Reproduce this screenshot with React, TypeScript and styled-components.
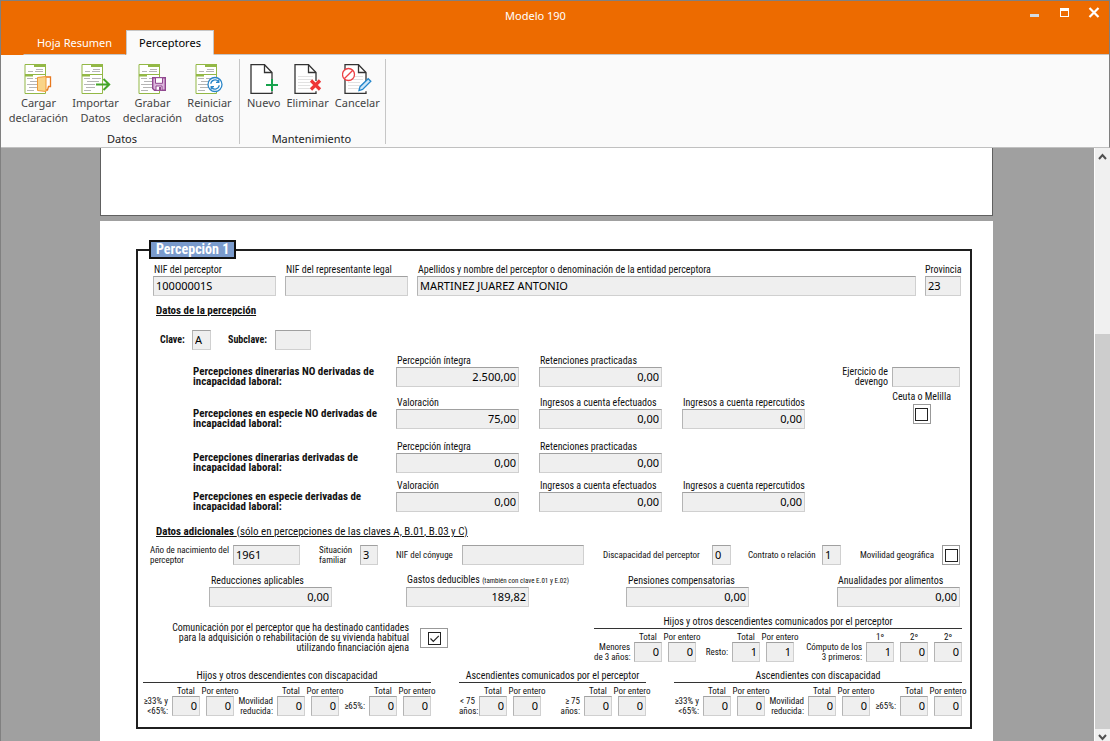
import React, { useId, useState } from 'react';
import styled, { createGlobalStyle } from 'styled-components';

const UI = '"Noto Sans", "Open Sans", sans-serif';
const FORM = '"Roboto Condensed", Roboto, "Liberation Sans", sans-serif';

const GlobalStyle = createGlobalStyle`
  * { box-sizing: border-box; }
  body { margin: 0; font-family: ${UI}; font-size: 11px; color: #111; background: #a0a0a0; }
`;

const Window = styled.div`
  display: flex;
  flex-direction: column;
  height: 100vh;
  overflow: hidden;
  border-top: 1px solid #808080;
  border-left: 1px solid #808080;
`;

/* ---------- title bar and tabs ---------- */

const Header = styled.header`
  flex: none;
  background: #ed6b00;
  border-right: 1px solid #808080;
`;

const TitleBar = styled.div`
  display: flex;
  height: 29px;
  padding-left: 50px;
`;

const Title = styled.h1`
  flex: 1;
  margin: 0;
  font-size: 11px;
  font-weight: 400;
  line-height: 29px;
  text-align: center;
  color: #fff;
`;

const WindowControls = styled.div`
  display: flex;
  justify-content: flex-end;
  width: 89px;
  padding: 6px 9px 0 0;
`;

const WindowButton = styled.button`
  flex: none;
  width: 30px;
  height: 12px;
  padding: 0;
  border: 0;
  background: none;

  svg { display: block; margin-left: auto; }
`;

const Tabs = styled.nav`
  display: flex;
  height: 25px;
  padding-left: 22px;
`;

const Tab = styled.button<{ $active?: boolean }>`
  width: ${(p) => (p.$active ? 88 : 103)}px;
  padding: 0;
  border: 1px solid ${(p) => (p.$active ? '#c6c6c6' : 'transparent')};
  border-bottom-color: ${(p) => (p.$active ? '#fafafa' : '#c6c6c6')};
  background: ${(p) => (p.$active ? '#fafafa' : 'none')};
  color: ${(p) => (p.$active ? '#000' : '#fff')};
  font: 11px ${UI};
`;

const TabRule = styled.div`
  flex: 1;
  border-bottom: 1px solid #c6c6c6;
`;

/* ---------- ribbon ---------- */

const Ribbon = styled.div`
  display: flex;
  flex: none;
  height: 93px;
  padding-top: 4px;
  background: #fafafa;
  border-right: 1px solid #808080;
  border-bottom: 1px solid #c0c0c0;
`;

const RibbonGroup = styled.section<{ $start: number; $end: number }>`
  display: flex;
  flex-direction: column;
  justify-content: space-between;
  height: 85px;
  padding: 5px ${(p) => p.$end}px 0 ${(p) => p.$start}px;
  border-right: 1px solid #c6c6c6;
`;

const Tools = styled.div<{ $gap?: number }>`
  display: flex;
  gap: ${(p) => p.$gap ?? 0}px;
`;

const Tool = styled.button<{ $width?: number }>`
  display: flex;
  flex-direction: column;
  align-items: center;
  gap: 1px;
  width: ${(p) => (p.$width ? `${p.$width}px` : 'auto')};
  padding: 0;
  border: 0;
  background: none;
  color: #444;
  font: 11px/15px ${UI};
  white-space: nowrap;
`;

const GroupName = styled.h2`
  margin: 0;
  padding-right: 4px;
  font-size: 11px;
  font-weight: 400;
  line-height: 10px;
  text-align: center;
  color: #222;
`;

/* ---------- document area ---------- */

const Body = styled.div`
  display: flex;
  flex: 1;
  min-height: 0;
`;

const Workspace = styled.main`
  flex: 1;
  min-width: 0;
  overflow: hidden;
  padding: 0 101px 0 99px;
`;

const PreviousSheet = styled.div`
  height: 68px;
  margin-bottom: 5px;
  background: #fff;
  border: 1px solid #606060;
  border-top: 0;
`;

const Sheet = styled.form`
  min-height: 100%;
  padding: 19px 21px 20px 36px;
  background: #fff;
  font-family: ${FORM};
  font-size: 10px;
`;

const Frame = styled.fieldset`
  min-width: 0;
  margin: 0;
  padding: 5px 8px 11px 0;
  border: 2px solid #1f1f1f;
`;

const Legend = styled.legend`
  margin-left: 11px;
  padding: 0 5px;
  border: 2px solid #111;
  background: #7a9bcd;
  color: #fff;
  font-size: 14px;
  font-weight: 700;
  line-height: 15px;
`;

const Row = styled.div<{ $top?: number; $left?: number }>`
  display: flex;
  align-items: flex-end;
  margin-top: ${(p) => p.$top ?? 0}px;
  padding-left: ${(p) => p.$left ?? 0}px;
`;

const HeaderRow = styled.div`
  display: grid;
  grid-template-columns: 123px 123px 1fr 36px;
  column-gap: 9px;
  padding: 0 1px 0 15px;
`;

const SectionTitle = styled.h3<{ $top: number }>`
  margin: ${(p) => p.$top}px 0 0 18px;
  font-size: 11px;
  font-weight: 700;
  line-height: 14px;
  text-decoration: underline;
`;

const SectionNote = styled.span`
  font-weight: 400;
`;

const FieldBox = styled.div<{ $width?: number; $left?: number }>`
  display: flex;
  flex: none;
  flex-direction: column;
  width: ${(p) => (p.$width ? `${p.$width}px` : 'auto')};
  margin-left: ${(p) => p.$left ?? 0}px;
`;

const TopLabel = styled.label<{ $small?: boolean; $indent?: number }>`
  padding-left: ${(p) => p.$indent ?? 0}px;
  font-size: ${(p) => (p.$small ? 9 : 10)}px;
  line-height: ${(p) => (p.$small ? 10 : 12)}px;
  text-align: ${(p) => (p.$small ? 'center' : 'left')};
  white-space: nowrap;
`;

const LabelNote = styled.span`
  font-size: 7px;
`;

const Entry = styled.input<{ $width?: number; $right?: boolean }>`
  flex: none;
  width: ${(p) => (p.$width ? `${p.$width}px` : '100%')};
  height: 20px;
  padding: 0 2px 1px;
  border: 1px solid;
  border-color: #a0a0a0 #d0d0d0 #d0d0d0 #b4b4b4;
  border-radius: 0;
  background: #efefef;
  color: #000;
  font: 11px ${UI};
  text-align: ${(p) => (p.$right ? 'right' : 'left')};
`;

const InlineField = styled.div<{ $left?: number }>`
  display: flex;
  flex: none;
  align-items: center;
  margin-left: ${(p) => p.$left ?? 0}px;
`;

const SideLabel = styled.label<{ $width: number; $bold?: boolean }>`
  flex: none;
  width: ${(p) => p.$width}px;
  font-size: ${(p) => (p.$bold ? 10 : 9)}px;
  font-weight: ${(p) => (p.$bold ? 700 : 400)};
  line-height: 10px;
  white-space: nowrap;
`;

const Concepts = styled.div`
  display: flex;
  justify-content: space-between;
  align-items: flex-start;
  margin-top: 5px;
`;

const ConceptRow = styled.div<{ $top?: number }>`
  display: grid;
  grid-template-columns: 183px repeat(3, 123px);
  column-gap: 20px;
  align-items: end;
  margin-top: ${(p) => p.$top ?? 0}px;
  padding-left: 55px;
`;

const ConceptName = styled.p`
  margin: 0;
  font-size: 11px;
  font-weight: 700;
  line-height: 10px;
  white-space: nowrap;
`;

const Extras = styled.div`
  display: flex;
  flex-direction: column;
  align-items: flex-end;
  padding: 12px 2px 0 0;
`;

const AccrualField = styled.div`
  display: flex;
  gap: 4px;
  text-align: right;
  line-height: 10px;
`;

const TickField = styled.div`
  display: flex;
  flex-direction: column;
  align-items: center;
  gap: 1px;
  margin-top: 4px;
  padding-right: 9px;
`;

const TickFrame = styled.span<{ $width: number }>`
  display: grid;
  flex: none;
  place-items: center;
  width: ${(p) => p.$width}px;
  height: 20px;
  border: 1px solid #999;
  background: #fff;

  > * { grid-area: 1 / 1; }
`;

const TickInput = styled.input`
  width: 13px;
  height: 13px;
  margin: 0;
  appearance: none;
  border: 1px solid #222;
  background: #fff;
`;

const TickMark = styled.svg`
  pointer-events: none;
`;

const Bottom = styled.div`
  display: flex;
  justify-content: space-between;
  align-items: flex-start;
  margin-top: 9px;
`;

const HousingField = styled.div`
  display: flex;
  align-items: center;
  gap: 11px;
  padding-top: 7px;
`;

const HousingLabel = styled.label`
  width: 271px;
  line-height: 10px;
  text-align: right;
`;

const FamilyRow = styled.div`
  display: flex;
  justify-content: space-between;
  margin-top: 8px;
  padding-left: 5px;
`;

const Family = styled.section`
  display: flex;
  flex-direction: column;
`;

const FamilyTitle = styled.h3`
  margin: 0 0 3px;
  border-bottom: 1px solid #333;
  font-size: 10px;
  font-weight: 400;
  line-height: 12px;
  text-align: center;
`;

const FamilyFields = styled.div`
  display: flex;
  align-items: flex-end;
`;

const CountGroup = styled.div`
  display: flex;
  align-items: flex-end;
  gap: 6px;
`;

const CountName = styled.p<{ $width: number }>`
  display: flex;
  flex-direction: column;
  justify-content: center;
  flex: none;
  width: ${(p) => p.$width}px;
  height: 20px;
  margin: 0 -3px 0 0;
  padding-right: 1px;
  font-size: 9px;
  line-height: 10px;
  text-align: right;
  white-space: nowrap;
`;

const CountField = styled.div`
  display: flex;
  flex-direction: column;
  align-items: center;
  width: 28px;
`;

/* ---------- scroll bar ---------- */

const ScrollBar = styled.div`
  display: flex;
  flex: none;
  flex-direction: column;
  width: 16px;
  border-left: 1px solid #fff;
  background: #f0f0f0;
`;

const ScrollButton = styled.button<{ $last?: boolean }>`
  flex: none;
  height: ${(p) => (p.$last ? 12 : 17)}px;
  padding: ${(p) => (p.$last ? 5 : 0)}px 0 0;
  border: 0;
  background: none;
  line-height: 0;
`;

const Track = styled.div`
  display: flex;
  flex: 1;
  flex-direction: column;
  justify-content: flex-end;
`;

const Thumb = styled.div`
  height: 70%;
  background: #cdcdcd;
`;

/* ---------- icons ---------- */

function ListDoc({ children }: { children: React.ReactNode }) {
  return (
    <svg width="30" height="30" viewBox="0 0 30 30" fill="none" aria-hidden="true">
      <path d="M1 .5h20.5v29H1z" fill="#fff" stroke="#93b846" />
      <path d="M10 0h12v3H10zM1 10h21v1H1zM1 10h8v2.500H1z" fill="#93b846" />
      <path d="M12 5.500h7M4 7.500h5M11 7.500h8M3 14.500h6M11 14.500h9M6 17.500h12M3 20.500h11M5 23.500h9M3 26.500h7" stroke="#b5b5b5" />
      {children}
    </svg>
  );
}

function BlankDoc({ lines, children, shift = 0 }: { lines?: boolean; children: React.ReactNode; shift?: number }) {
  return (
    <svg width={28 + shift} height="30" viewBox={`${-shift} 0 ${28 + shift} 30`} fill="none" aria-hidden="true">
      <path d="M22 17V8.500L14.500.700H1v28.600h21v-2" fill="#fff" stroke="#333" strokeWidth="1.300" />
      <path d="M14.500.700v7.800H22" stroke="#333" strokeWidth="1.300" />
      {lines && <path d="M4 12.500h15M4 15.500h15M4 18.500h12M4 21.500h12M4 24.500h12" stroke="#e2e2e2" />}
      {children}
    </svg>
  );
}

const LoadIcon = () => (
  <ListDoc>
    <path d="M21.500 13h5v9.500h-2l-1 3.500h-2" fill="#fff" stroke="#e8781e" strokeWidth="1.300" />
    <path d="M13.500 13.500l8.500-1v15l-8.500-1z" fill="#f9d488" stroke="#ef9a37" />
  </ListDoc>
);

const ImportIcon = () => (
  <ListDoc>
    <path d="M15 20.500h13M22.500 15l5.700 5.500-5.700 5.500" stroke="#43a528" strokeWidth="2" />
  </ListDoc>
);

const SaveIcon = () => (
  <ListDoc>
    <path d="M14.700 13.700h12.600v12.600H16.500l-1.800-1.800z" fill="#dcb6dc" stroke="#90478f" strokeWidth="1.400" />
    <path d="M17.500 13.700h7v5.600h-7z" fill="#fff" stroke="#90478f" />
    <path d="M18 26.300v-4.300h6v4.300z" fill="#fff" stroke="#90478f" />
    <path d="M21 23h2v3h-2z" fill="#90478f" />
  </ListDoc>
);

const RestartIcon = () => (
  <ListDoc>
    <circle cx="20" cy="20.500" r="7" fill="#fff" stroke="#2a86c8" strokeWidth="1.300" />
    <path d="M15.800 19.800a4.300 4.300 0 0 1 7.600-2.300M24.200 21.200a4.300 4.300 0 0 1-7.600 2.300M23.800 15.500v2.800H21M16.200 25.500v-2.800H19" stroke="#2a86c8" strokeWidth="1.300" />
  </ListDoc>
);

const NewIcon = () => (
  <BlankDoc>
    <path d="M16 21h12M22 15v12" stroke="#17a34d" strokeWidth="2" />
  </BlankDoc>
);

const DeleteIcon = () => (
  <BlankDoc lines>
    <path d="M17 16.500l9 9M26 16.500l-9 9" stroke="#ee3537" strokeWidth="3.200" />
  </BlankDoc>
);

const CancelIcon = () => (
  <BlankDoc lines shift={2}>
    <circle cx="4.500" cy="10.500" r="6" fill="#fff" stroke="#ee4145" strokeWidth="1.300" />
    <path d="M.500 14.500l8.300-8.300" stroke="#ee4145" strokeWidth="1.300" />
    <path d="M15 26.500l1-3.800 8.200-8 2.600 2.500-8.200 8.200z" fill="#cfe6f7" stroke="#2487cc" strokeWidth="1.300" />
  </BlankDoc>
);

/* ---------- form parts ---------- */

type FieldProps = { label: React.ReactNode; value?: string; width?: number; left?: number; right?: boolean; indent?: number };

function Field({ label, value = '', width, left, right, indent }: FieldProps) {
  const id = useId();
  return (
    <FieldBox $width={width} $left={left}>
      <TopLabel htmlFor={id} $indent={indent ?? 1}>{label}</TopLabel>
      <Entry id={id} defaultValue={value} $right={right} />
    </FieldBox>
  );
}

type SideFieldProps = {
  label: React.ReactNode;
  labelWidth: number;
  width: number;
  left?: number;
  value?: string;
  bold?: boolean;
};

function SideField({ label, labelWidth, width, left, value = '', bold }: SideFieldProps) {
  const id = useId();
  return (
    <InlineField $left={left}>
      <SideLabel htmlFor={id} $width={labelWidth} $bold={bold}>{label}</SideLabel>
      <Entry id={id} defaultValue={value} $width={width} />
    </InlineField>
  );
}

function Tick({ id, width, initial = false }: { id: string; width: number; initial?: boolean }) {
  const [on, setOn] = useState(initial);
  return (
    <TickFrame $width={width}>
      <TickInput id={id} type="checkbox" checked={on} onChange={(e) => setOn(e.target.checked)} />
      {on && (
        <TickMark width="13" height="13" viewBox="0 0 13 13" fill="none" aria-hidden="true">
          <path d="M2.500 6.500l2.800 2.800 5.500-5.500" stroke="#222" strokeWidth="1.200" />
        </TickMark>
      )}
    </TickFrame>
  );
}

function Count({ label, value }: { label: string; value: string }) {
  const id = useId();
  return (
    <CountField>
      <TopLabel htmlFor={id} $small>{label}</TopLabel>
      <Entry id={id} defaultValue={value} $width={28} $right />
    </CountField>
  );
}

type CountsProps = { name: string[]; nameWidth: number; values: string[]; labels?: string[] };

function Counts({ name, nameWidth, values, labels = ['Total', 'Por entero'] }: CountsProps) {
  return (
    <CountGroup>
      <CountName $width={nameWidth - 3}>
        {name.map((line) => <span key={line}>{line}</span>)}
      </CountName>
      {values.map((value, i) => <Count key={i} label={labels[i]} value={value} />)}
    </CountGroup>
  );
}

const concepts = [
  { name: 'Percepciones dinerarias NO derivadas de', top: 0, fields: [['Percepción íntegra', '2.500,00'], ['Retenciones practicadas', '0,00']] },
  { name: 'Percepciones en especie NO derivadas de', top: 10, fields: [['Valoración', '75,00'], ['Ingresos a cuenta efectuados', '0,00'], ['Ingresos a cuenta repercutidos', '0,00']] },
  { name: 'Percepciones dinerarias derivadas de', top: 12, fields: [['Percepción íntegra', '0,00'], ['Retenciones practicadas', '0,00']] },
  { name: 'Percepciones en especie derivadas de', top: 7, fields: [['Valoración', '0,00'], ['Ingresos a cuenta efectuados', '0,00'], ['Ingresos a cuenta repercutidos', '0,00']] },
];

const disabilityGroups = [
  { name: ['≥33% y', '<65%:'], nameWidth: 29 },
  { name: ['Movilidad', 'reducida:'], nameWidth: 43 },
  { name: ['≥65%:'], nameWidth: 30 },
];

export default function App() {
  const accrualId = useId();
  return (
    <>
      <GlobalStyle />
      <Window>
        <Header>
          <TitleBar>
            <Title>Modelo 190</Title>
            <WindowControls>
              <WindowButton type="button" aria-label="Minimizar">
                <svg width="10" height="12" viewBox="0 0 10 12"><path d="M0 7h9v3H0z" fill="#d3dbe3" /></svg>
              </WindowButton>
              <WindowButton type="button" aria-label="Maximizar">
                <svg width="10" height="12" viewBox="0 0 10 12"><path d="M0 1h9v9H0zM1 4v5h7V4z" fill="#fff" fillRule="evenodd" /></svg>
              </WindowButton>
              <WindowButton type="button" aria-label="Cerrar">
                <svg width="12" height="12" viewBox="0 0 12 12"><path d="M1.500 1l9 9M10.500 1l-9 9" stroke="#fff" strokeWidth="2.200" /></svg>
              </WindowButton>
            </WindowControls>
          </TitleBar>
          <Tabs>
            <Tab type="button">Hoja Resumen</Tab>
            <Tab type="button" $active>Perceptores</Tab>
            <TabRule />
          </Tabs>
        </Header>

        <Ribbon>
          <RibbonGroup $start={9} $end={1}>
            <Tools>
              <Tool type="button" $width={57}><LoadIcon /><span>Cargar<br />declaración</span></Tool>
              <Tool type="button" $width={57}><ImportIcon /><span>Importar<br />Datos</span></Tool>
              <Tool type="button" $width={57}><SaveIcon /><span>Grabar<br />declaración</span></Tool>
              <Tool type="button" $width={57}><RestartIcon /><span>Reiniciar<br />datos</span></Tool>
            </Tools>
            <GroupName>Datos</GroupName>
          </RibbonGroup>
          <RibbonGroup $start={7} $end={5}>
            <Tools $gap={6}>
              <Tool type="button"><NewIcon />Nuevo</Tool>
              <Tool type="button"><DeleteIcon />Eliminar</Tool>
              <Tool type="button"><CancelIcon />Cancelar</Tool>
            </Tools>
            <GroupName>Mantenimiento</GroupName>
          </RibbonGroup>
        </Ribbon>

        <Body>
          <Workspace>
            <PreviousSheet />
            <Sheet>
              <Frame>
                <Legend>Percepción 1</Legend>

                <HeaderRow>
                  <Field label="NIF del perceptor" value="10000001S" />
                  <Field label="NIF del representante legal" />
                  <Field label="Apellidos y nombre del perceptor o denominación de la entidad perceptora" value="MARTINEZ JUAREZ ANTONIO" />
                  <Field label="Provincia" value="23" indent={0} />
                </HeaderRow>

                <SectionTitle $top={8}>Datos de la percepción</SectionTitle>

                <Row $top={12} $left={22}>
                  <SideField label="Clave:" labelWidth={32} width={19} value="A" bold />
                  <SideField label="Subclave:" labelWidth={47} width={36} left={17} bold />
                </Row>

                <Concepts>
                  <div>
                    {concepts.map((c) => (
                      <ConceptRow key={c.name} $top={c.top}>
                        <ConceptName>{c.name}<br />incapacidad laboral:</ConceptName>
                        {c.fields.map(([label, value]) => <Field key={label} label={label} value={value} right />)}
                      </ConceptRow>
                    ))}
                  </div>
                  <Extras>
                    <AccrualField>
                      <label htmlFor={accrualId}>Ejercicio de<br />devengo</label>
                      <Entry id={accrualId} $width={68} />
                    </AccrualField>
                    <TickField>
                      <TopLabel htmlFor="ceuta">Ceuta o Melilla</TopLabel>
                      <Tick id="ceuta" width={18} />
                    </TickField>
                  </Extras>
                </Concepts>

                <SectionTitle $top={13}>
                  Datos adicionales <SectionNote>(sólo en percepciones de las claves A, B.01, B.03 y C)</SectionNote>
                </SectionTitle>

                <Row $top={6} $left={12}>
                  <SideField label={<>Año de nacimiento del<br />perceptor</>} labelWidth={83} width={67} value="1961" />
                  <SideField label={<>Situación<br />familiar</>} labelWidth={41} width={18} left={19} value="3" />
                  <SideField label="NIF del cónyuge" labelWidth={66} width={122} left={18} />
                  <SideField label="Discapacidad del perceptor" labelWidth={109} width={19} left={19} value="0" />
                  <SideField label="Contrato o relación" labelWidth={74} width={19} left={17} value="1" />
                  <InlineField $left={19}>
                    <SideLabel htmlFor="movilidad" $width={82}>Movilidad geográfica</SideLabel>
                    <Tick id="movilidad" width={18} />
                  </InlineField>
                </Row>

                <Row $top={9}>
                  <Field label="Reducciones aplicables" value="0,00" width={123} left={71} right indent={2} />
                  <Field label={<>Gastos deducibles <LabelNote>(también con clave E.01 y E.02)</LabelNote></>} value="189,82" width={123} left={74} right />
                  <Field label="Pensiones compensatorias" value="0,00" width={123} left={97} right indent={2} />
                  <Field label="Anualidades por alimentos" value="0,00" width={123} left={88} right />
                </Row>

                <Bottom>
                  <HousingField>
                    <HousingLabel htmlFor="vivienda">
                      Comunicación por el perceptor que ha destinado cantidades<br />
                      para la adquisición o rehabilitación de su vivienda habitual<br />
                      utilizando financiación ajena
                    </HousingLabel>
                    <Tick id="vivienda" width={28} initial />
                  </HousingField>
                  <Family>
                    <FamilyTitle>Hijos y otros descendientes comunicados por el perceptor</FamilyTitle>
                    <FamilyFields>
                      <Counts name={['Menores', 'de 3 años:']} nameWidth={40} values={['0', '0']} />
                      <Counts name={['Resto:']} nameWidth={36} values={['1', '1']} />
                      <Counts name={['Cómputo de los', '3 primeros:']} nameWidth={72} values={['1', '0', '0']} labels={['1º', '2º', '2º']} />
                    </FamilyFields>
                  </Family>
                </Bottom>

                <FamilyRow>
                  <Family>
                    <FamilyTitle>Hijos y otros descendientes con discapacidad</FamilyTitle>
                    <FamilyFields>
                      {disabilityGroups.map((g) => <Counts key={g.nameWidth} {...g} values={['0', '0']} />)}
                    </FamilyFields>
                  </Family>
                  <Family>
                    <FamilyTitle>Ascendientes comunicados por el perceptor</FamilyTitle>
                    <FamilyFields>
                      <Counts name={['< 75', 'años:']} nameWidth={20} values={['0', '0']} />
                      <Counts name={['≥ 75', 'años:']} nameWidth={43} values={['0', '0']} />
                    </FamilyFields>
                  </Family>
                  <Family>
                    <FamilyTitle>Ascendientes con discapacidad</FamilyTitle>
                    <FamilyFields>
                      {disabilityGroups.map((g) => <Counts key={g.nameWidth} {...g} values={['0', '0']} />)}
                    </FamilyFields>
                  </Family>
                </FamilyRow>
              </Frame>
            </Sheet>
          </Workspace>
          <ScrollBar>
            <ScrollButton type="button" aria-label="Subir">
              <svg width="9" height="7" viewBox="0 0 9 7" fill="none"><path d="M1 6l3.500-4L8 6" stroke="#505050" strokeWidth="2" /></svg>
            </ScrollButton>
            <Track><Thumb /></Track>
            <ScrollButton type="button" aria-label="Bajar" $last>
              <svg width="9" height="7" viewBox="0 0 9 7" fill="none"><path d="M1 1l3.500 4L8 1" stroke="#505050" strokeWidth="2" /></svg>
            </ScrollButton>
          </ScrollBar>
        </Body>
      </Window>
    </>
  );
}
